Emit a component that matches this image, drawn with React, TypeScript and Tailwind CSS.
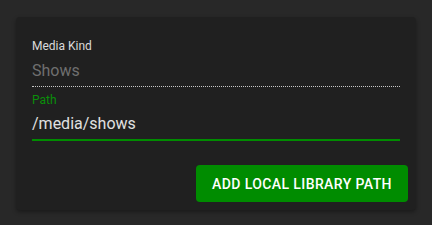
export default function App() {
  return (
    <main className="min-h-screen bg-[#282828] pt-[17px] px-4 font-['Roboto','Liberation_Sans',sans-serif]">
      <div className="w-[400px] h-[193px] rounded bg-[#202020] shadow-[0_2px_4px_rgba(0,0,0,0.35)] flex flex-col">
        <div className="px-4 pt-[21px]">
          {/* disabled select */}
          <div className="border-b border-dotted border-[#c8c8c8] pb-[3px]">
            <div className="text-xs leading-4 text-[#dadada]">Media Kind</div>
            <div className="mt-[5px] text-base leading-6 text-[#6f6f6f]">Shows</div>
          </div>

          {/* focused text field */}
          <div className="mt-[5px] border-b-2 border-[#008c00] pb-[3px]">
            <div className="text-xs leading-4 text-[#0a8f0a]">Path</div>
            <div className="mt-1 text-base leading-6 text-[#e0e0e0]">/media/shows</div>
          </div>
        </div>

        <div className="mt-auto flex justify-end p-2">
          <button className="h-[37px] w-[212px] rounded bg-[#008c00] text-sm font-medium uppercase tracking-[0.4px] text-white">
            Add Local Library Path
          </button>
        </div>
      </div>
    </main>
  );
}
